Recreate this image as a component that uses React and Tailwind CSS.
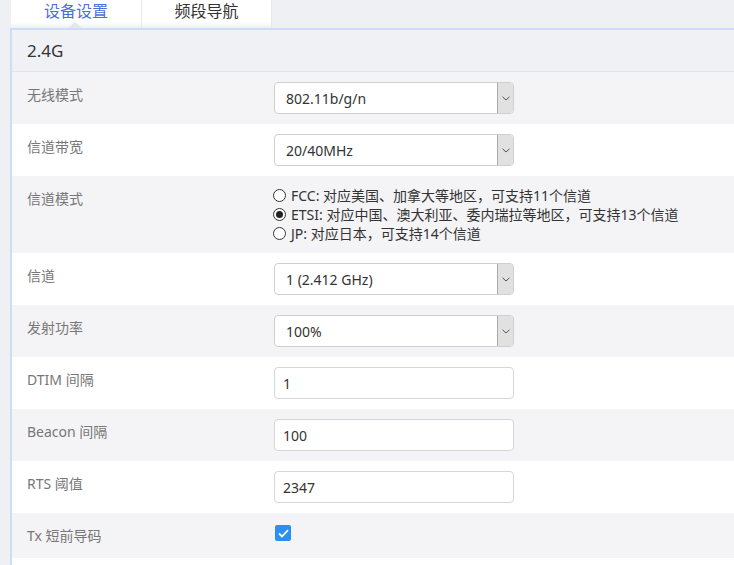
import React from "react";

const font = { fontFamily: '"Noto Sans", "Noto Sans CJK SC", sans-serif' };

function Chevron() {
  return (
    <svg width="8" height="5" viewBox="0 0 8 5" fill="none">
      <path d="M0.5 0.8 L4 4 L7.5 0.8" stroke="#555" strokeWidth="1" />
    </svg>
  );
}

function Select({ value }) {
  return (
    <div className="flex h-[32px] w-[240px] rounded-[4px] border border-[#cfcfcf] bg-white">
      <div className="flex flex-1 items-center pl-[11px] text-[14px] text-[#333]">{value}</div>
      <div className="flex w-[16px] items-center justify-center rounded-r-[3px] border-l border-[#ababab] bg-[#e1e1e1]">
        <Chevron />
      </div>
    </div>
  );
}

function Input({ value }) {
  return (
    <div className="flex h-[32px] w-[240px] items-center rounded-[4px] border border-[#d6d6d6] bg-white pl-[8px] text-[14px] text-[#333]">
      {value}
    </div>
  );
}

function Radio({ checked, children }) {
  return (
    <div className="flex h-[19px] items-center">
      <span className="mr-[5px] ml-[-1px] flex h-[13px] w-[13px] items-center justify-center rounded-full border border-[#333] bg-white">
        {checked && <span className="h-[7px] w-[7px] rounded-full bg-[#222]" />}
      </span>
      <span className="text-[14px] text-[#333]">{children}</span>
    </div>
  );
}

function Row({ label, gray, children, h = "h-[52px]", pt = "pt-[10px]" }) {
  return (
    <div className={`flex ${h} ${gray ? "bg-[#f4f4f6]" : "bg-white"}`}>
      <div className="w-[262px] pl-[15px] pt-[13px] text-[14px] leading-[20px] text-[#777]">{label}</div>
      <div className={pt}>{children}</div>
    </div>
  );
}

export default function App() {
  return (
    <div className="h-[565px] w-[734px] overflow-hidden bg-[#eff0f4] pl-[10px]" style={font}>
      <div className="flex h-[28px] pl-[1px]">
        <div className="relative flex w-[130px] justify-center bg-gradient-to-b from-white from-80% to-[#eef0f5] text-[16px] leading-[22px] text-[#4d6fd8]">
          设备设置
          <div className="absolute bottom-0 left-[57px] h-0 w-0 border-x-[7px] border-b-[6px] border-x-transparent border-b-[#e3e6ee]" />
        </div>
        <div className="flex w-[131px] justify-center border-x border-[#e8e8ec] bg-gradient-to-b from-white from-80% to-[#eef0f5] text-[16px] leading-[22px] text-[#333]">
          频段导航
        </div>
      </div>
      <div className="border-t-2 border-l-2 border-[#cfdcf5] bg-white">
        <div className="flex h-[42px] items-center border-b border-[#e3e3e6] bg-[#f0f1f5] pl-[15px] text-[17px] text-[#333]">
          2.4G
        </div>
        <Row label="无线模式" gray>
          <Select value="802.11b/g/n" />
        </Row>
        <Row label="信道带宽">
          <Select value="20/40MHz" />
        </Row>
        <Row label="信道模式" gray h="h-[77px]">
          <Radio>FCC: 对应美国、加拿大等地区，可支持11个信道</Radio>
          <Radio checked>ETSI: 对应中国、澳大利亚、委内瑞拉等地区，可支持13个信道</Radio>
          <Radio>JP: 对应日本，可支持14个信道</Radio>
        </Row>
        <Row label="信道">
          <Select value="1 (2.412 GHz)" />
        </Row>
        <Row label="发射功率" gray>
          <Select value="100%" />
        </Row>
        <Row label="DTIM 间隔">
          <Input value="1" />
        </Row>
        <Row label="Beacon 间隔" gray>
          <Input value="100" />
        </Row>
        <Row label="RTS 阈值">
          <Input value="2347" />
        </Row>
        <Row label="Tx 短前导码" gray h="h-[45px]" pt="pt-[12px]">
          <div className="ml-[1px] flex h-[16px] w-[16px] items-center justify-center rounded-[2px] bg-[#2b8ff0]">
            <svg width="11" height="9" viewBox="0 0 11 9" fill="none">
              <path d="M1 4.5 L4 7.5 L10 1.2" stroke="white" strokeWidth="1.8" />
            </svg>
          </div>
        </Row>
        <div className="h-[20px] bg-white" />
      </div>
    </div>
  );
}
